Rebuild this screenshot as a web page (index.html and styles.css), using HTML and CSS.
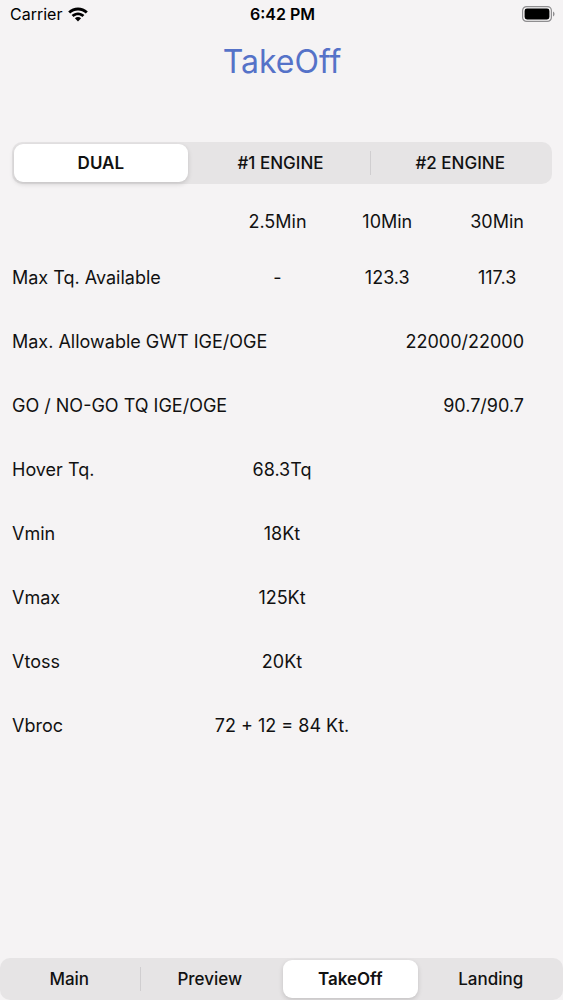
FILE: index.html
```html
<!DOCTYPE html>
<html lang="en">
<head>
    <meta charset="UTF-8">
    <meta name="viewport" content="width=device-width, initial-scale=1.0">
    <title>TakeOff</title>
    <link rel="stylesheet" href="styles.css">
</head>
<body>
    <header class="status-bar">
        <div class="carrier">
            <span>Carrier</span>
            <svg class="wifi" viewBox="0 0 20 15" aria-hidden="true">
                <path d="M0.2 4.6 C5.6 -0.9 14.4 -0.9 19.8 4.6 L17.8 6.6 C13.5 2.3 6.5 2.3 2.2 6.6 Z"/>
                <path d="M3.6 8 C7.2 4.5 12.8 4.5 16.4 8 L14.4 10 C12 7.6 8 7.6 5.6 10 Z"/>
                <path d="M6.9 11.3 C8.7 9.7 11.3 9.7 13.1 11.3 L10 14.5 Z"/>
            </svg>
        </div>
        <div class="time">6:42 PM</div>
        <svg class="battery" viewBox="0 0 33 16" aria-hidden="true">
            <rect x="0.6" y="0.6" width="28.8" height="14.8" rx="4" fill="none" stroke="#8f8e90" stroke-width="1.2"/>
            <rect x="2.6" y="2.6" width="24.8" height="10.8" rx="2.4"/>
            <path d="M31 5.5 C33 6.3 33 9.7 31 10.5 Z" fill="#8f8e90"/>
        </svg>
    </header>

    <main>
        <h1>TakeOff</h1>

        <div class="segments">
            <button type="button" class="segment active">DUAL</button>
            <button type="button" class="segment divided">#1 ENGINE</button>
            <button type="button" class="segment">#2 ENGINE</button>
        </div>

        <table class="torque">
            <thead>
                <tr>
                    <td class="label-col"></td>
                    <th scope="col">2.5Min</th>
                    <th scope="col">10Min</th>
                    <th scope="col">30Min</th>
                </tr>
            </thead>
            <tbody>
                <tr>
                    <th scope="row">Max Tq. Available</th>
                    <td>-</td>
                    <td>123.3</td>
                    <td>117.3</td>
                </tr>
                <tr>
                    <th scope="row" colspan="2">Max. Allowable GWT IGE/OGE</th>
                    <td class="wide" colspan="2">22000/22000</td>
                </tr>
                <tr>
                    <th scope="row" colspan="2">GO / NO-GO TQ IGE/OGE</th>
                    <td class="wide" colspan="2">90.7/90.7</td>
                </tr>
            </tbody>
        </table>

        <table>
            <tbody>
                <tr>
                    <th scope="row">Hover Tq.</th>
                    <td>68.3Tq</td>
                    <td></td>
                </tr>
                <tr>
                    <th scope="row">Vmin</th>
                    <td>18Kt</td>
                    <td></td>
                </tr>
                <tr>
                    <th scope="row">Vmax</th>
                    <td>125Kt</td>
                    <td></td>
                </tr>
                <tr>
                    <th scope="row">Vtoss</th>
                    <td>20Kt</td>
                    <td></td>
                </tr>
                <tr>
                    <th scope="row">Vbroc</th>
                    <td>72 + 12 = 84 Kt.</td>
                    <td></td>
                </tr>
            </tbody>
        </table>
    </main>

    <nav class="segments">
        <button type="button" class="segment divided">Main</button>
        <button type="button" class="segment">Preview</button>
        <button type="button" class="segment active">TakeOff</button>
        <button type="button" class="segment">Landing</button>
    </nav>

    <script>
        // move the white pill to the tapped segment
        document.querySelectorAll('.segments').forEach(group => {
            const buttons = [...group.querySelectorAll('.segment')];
            buttons.forEach(button => {
                button.addEventListener('click', () => {
                    buttons.forEach(b => b.classList.toggle('active', b === button));
                    buttons.forEach((b, i) => {
                        const next = buttons[i + 1];
                        b.classList.toggle('divided', !!next && b !== button && next !== button);
                    });
                });
            });
        });
    </script>
</body>
</html>
```
FILE: styles.css
```css
* {
    margin: 0;
    padding: 0;
    box-sizing: border-box;
}
body {
    display: flex;
    flex-direction: column;
    min-height: 100vh;
    background-color: #f5f3f4;
    color: #111;
    font-family: Inter, "Liberation Sans", sans-serif;
    font-size: 18px;
    line-height: 24px;
}
.status-bar {
    display: grid;
    grid-template-columns: 1fr auto 1fr;
    align-items: center;
    height: 28px;
    padding: 0 8px 0 10px;
    font-size: 16px;
    color: #000;
}
.carrier {
    display: flex;
    align-items: center;
    gap: 6px;
}
.wifi {
    width: 20px;
    height: 15px;
}
.time {
    font-weight: 600;
}
.battery {
    width: 33px;
    height: 16px;
    justify-self: end;
}
main {
    flex: 1;
    padding: 12px 11px 0 12px;
}
h1 {
    margin-bottom: 58px;
    text-align: center;
    font-size: 32px;
    font-weight: 400;
    line-height: 44px;
    color: #5572c8;
}
.segments {
    display: flex;
    height: 42px;
    padding: 2px;
    background-color: #e6e4e5;
    border-radius: 10px;
}
.segment {
    position: relative;
    flex: 1 1 0;
    margin: 0 3px;
    border: none;
    border-radius: 9px;
    background: none;
    color: #111;
    font-family: inherit;
    font-size: 17px;
    font-weight: 500;
    cursor: pointer;
}
.segment:first-child {
    margin-left: 0;
}
.segment.active {
    background-color: #fff;
    box-shadow: 0 2px 5px rgba(0, 0, 0, 0.15);
    font-weight: 600;
}
.segment.divided::after {
    content: "";
    position: absolute;
    top: 7px;
    bottom: 7px;
    right: -4px;
    width: 1px;
    background-color: #d0ced0;
}
table {
    width: 100%;
    table-layout: fixed;
    border-collapse: collapse;
}
th {
    font-weight: 400;
    white-space: nowrap;
}
th[scope="row"] {
    text-align: left;
}
td {
    text-align: center;
}
tbody tr {
    height: 64px;
}
thead tr {
    height: 48px;
}
.torque {
    margin-top: 14px;
}
.torque .label-col {
    width: 39%;
}
.torque .wide {
    padding-right: 28px;
    text-align: right;
}
```
